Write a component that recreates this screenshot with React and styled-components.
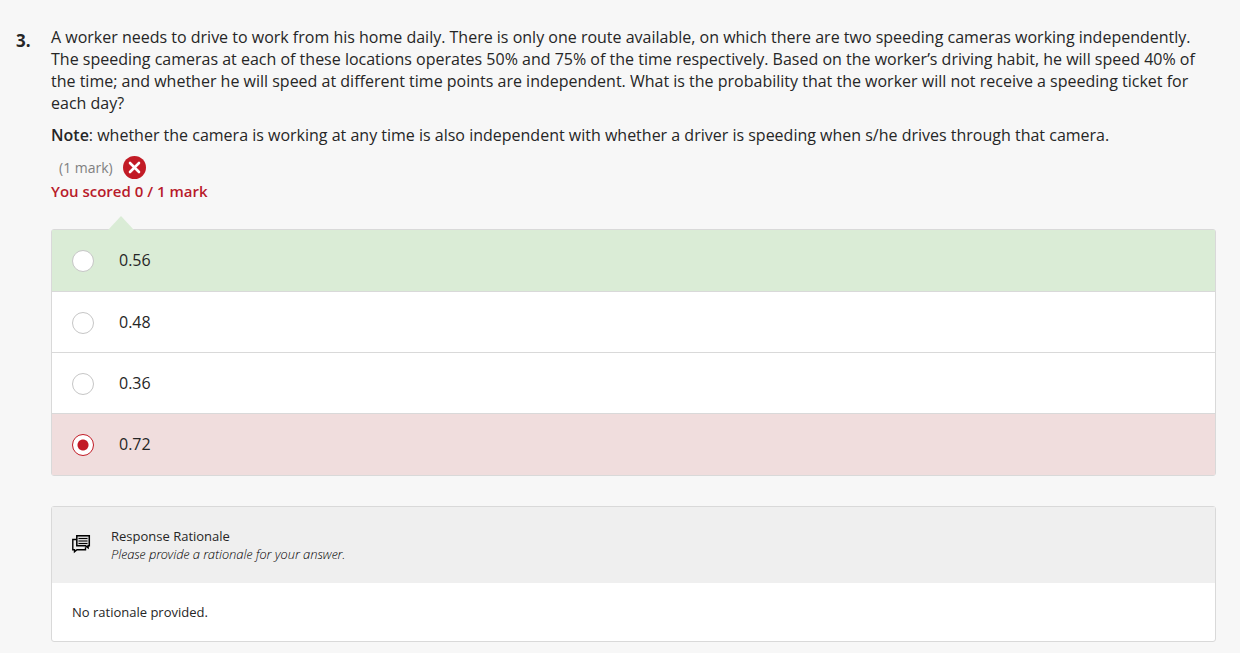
import React, { useState } from "react";
import styled, { createGlobalStyle, css } from "styled-components";

const GlobalStyle = createGlobalStyle`
  *, *::before, *::after { box-sizing: border-box; }
  body {
    margin: 0;
    background: #f7f7f7;
    color: #262626;
    font-family: "Open Sans", "Noto Sans", sans-serif;
    font-size: 16px;
    line-height: 22px;
  }
`;

const Question = styled.main`
  display: flex;
  padding: 26px 24px 11px 16px;
`;

const QuestionNumber = styled.div`
  flex: 0 0 35px;
  padding-top: 4px;
  font-size: 17px;
  font-weight: 700;
`;

const QuestionBody = styled.div`
  flex: 1;
  min-width: 0;
`;

const Paragraph = styled.p`
  margin: 0 0 10px;
`;

const Strong = styled.strong`
  font-weight: 600;
`;

const MarkLine = styled.div`
  display: flex;
  align-items: center;
  gap: 10px;
  height: 23px;
  margin-bottom: 1px;
  padding-left: 8px;
  color: #808080;
  font-size: 14px;
`;

const Score = styled.div`
  color: #b81b2b;
  font-size: 15px;
  font-weight: 600;
`;

const Answers = styled.fieldset`
  position: relative;
  min-width: 0;
  margin: 27px 0 0;
  padding: 0;
  border: 1px solid #d9d9d9;
  border-radius: 3px;
`;

const AnswerPointer = styled.span`
  position: absolute;
  top: -14px;
  left: 56px;
  width: 26px;
  height: 14px;
  background: #daecd6;
  clip-path: polygon(50% 0, 100% 100%, 0 100%);
`;

const tones = {
  correct: css`
    padding-bottom: 1px;
    background: #daecd6;
  `,
  incorrect: css`
    padding-bottom: 1px;
    background: #f0dddd;
  `,
};

const AnswerRow = styled.label`
  display: flex;
  align-items: center;
  gap: 25px;
  box-sizing: content-box;
  height: 60px;
  padding: 0 20px;
  background: #fff;
  ${(p) => tones[p.$tone]}

  & + & {
    border-top: 1px solid #d9d9d9;
  }
`;

const Radio = styled.input`
  appearance: none;
  flex: none;
  width: 22px;
  height: 22px;
  margin: 2px 0 0;
  border: 1px solid #c6c6c6;
  border-radius: 50%;
  background: #fff;

  &:checked {
    border-color: #c21b26;
    background: radial-gradient(circle, #c21b26 5px, #fff 6px);
  }
`;

const Rationale = styled.section`
  margin-top: 30px;
  border: 1px solid #d9d9d9;
  border-radius: 3px;
  background: #fff;
  font-size: 13px;
  line-height: 18px;
`;

const RationaleHeader = styled.header`
  display: flex;
  align-items: center;
  gap: 20px;
  padding: 20px;
  background: #efefef;
`;

const RationaleTitle = styled.h2`
  margin: 0;
  font-size: 13px;
  font-weight: 400;
`;

const RationaleHint = styled.p`
  margin: 0;
  color: #000;
  font-family: "Open Sans Light", "Open Sans", sans-serif;
  font-style: italic;
  font-weight: 300;
`;

const RationaleText = styled.p`
  margin: 0;
  padding: 20px;
`;

function IncorrectIcon() {
  return (
    <svg width="23" height="23" viewBox="0 0 23 23" role="img" aria-label="Incorrect">
      <circle cx="11.5" cy="11.5" r="11.5" fill="#c21b26" />
      <path d="M7 7l9 9M16 7l-9 9" stroke="#fff" strokeWidth="2.6" strokeLinecap="round" />
    </svg>
  );
}

function CommentsIcon() {
  return (
    <svg width="19" height="23" viewBox="0 0 19 23" fill="none" stroke="#000" aria-hidden="true">
      <path d="M4.5 5.5H.8V15.7h1.7v2L5 15.7h8.5v-2.5" strokeWidth="1.4" />
      <path d="M4.8 1.8h12.5v10h-1.2v2L13.5 11.8H4.8z" fill="#d5d5d5" strokeWidth="1.5" />
      <path d="M6.5 4.5h9M6.5 7h9M6.5 9.5h9" strokeWidth="1" />
    </svg>
  );
}

const answers = [
  { value: "0.56", tone: "correct" },
  { value: "0.48" },
  { value: "0.36" },
  { value: "0.72", tone: "incorrect" },
];

export default function App() {
  const [selected, setSelected] = useState("0.72");

  return (
    <>
      <GlobalStyle />
      <Question>
        <QuestionNumber>3.</QuestionNumber>
        <QuestionBody>
          <Paragraph>
            A worker needs to drive to work from his home daily. There is only one route available, on
            which there are two speeding cameras working independently. The speeding cameras at each of
            these locations operates 50% and 75% of the time respectively. Based on the worker’s driving
            habit, he will speed 40% of the time; and whether he will speed at different time points are
            independent. What is the probability that the worker will not receive a speeding ticket for
            each day?
          </Paragraph>
          <Paragraph>
            <Strong>Note</Strong>: whether the camera is working at any time is also independent with
            whether a driver is speeding when s/he drives through that camera.
          </Paragraph>
          <MarkLine>
            (1 mark)
            <IncorrectIcon />
          </MarkLine>
          <Score>You scored 0 / 1 mark</Score>

          <Answers aria-label="Answers">
            {answers.map(({ value, tone }) => (
              <AnswerRow key={value} $tone={tone}>
                <Radio
                  type="radio"
                  name="answer"
                  value={value}
                  checked={selected === value}
                  onChange={() => setSelected(value)}
                />
                {value}
              </AnswerRow>
            ))}
            <AnswerPointer />
          </Answers>

          <Rationale>
            <RationaleHeader>
              <CommentsIcon />
              <div>
                <RationaleTitle>Response Rationale</RationaleTitle>
                <RationaleHint>Please provide a rationale for your answer.</RationaleHint>
              </div>
            </RationaleHeader>
            <RationaleText>No rationale provided.</RationaleText>
          </Rationale>
        </QuestionBody>
      </Question>
    </>
  );
}
